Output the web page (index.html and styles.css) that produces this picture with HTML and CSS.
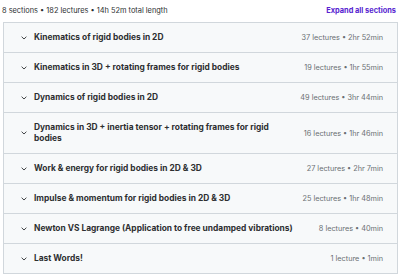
FILE: index.html
```html
<!DOCTYPE html>
<html>
<head>
<meta charset="utf-8">
<link rel="stylesheet" href="styles.css">
</head>
<body>
<div class="page">
  <div class="summary">
    <span class="stats">8 sections • 182 lectures • 14h 52m total length</span>
    <span class="expand">Expand all sections</span>
  </div>
  <div class="panel">
    <div class="row"><svg class="chev" viewBox="0 0 6 4"><path d="M0.6 0.7 L3 3 L5.4 0.7"/></svg><span class="title">Kinematics of rigid bodies in 2D</span><span class="meta">37 lectures • 2hr 52min</span></div>
    <div class="row"><svg class="chev" viewBox="0 0 6 4"><path d="M0.6 0.7 L3 3 L5.4 0.7"/></svg><span class="title">Kinematics in 3D + rotating frames for rigid bodies</span><span class="meta">19 lectures • 1hr 55min</span></div>
    <div class="row"><svg class="chev" viewBox="0 0 6 4"><path d="M0.6 0.7 L3 3 L5.4 0.7"/></svg><span class="title">Dynamics of rigid bodies in 2D</span><span class="meta">49 lectures • 3hr 44min</span></div>
    <div class="row tall"><svg class="chev" viewBox="0 0 6 4"><path d="M0.6 0.7 L3 3 L5.4 0.7"/></svg><span class="title">Dynamics in 3D + inertia tensor + rotating frames for rigid bodies</span><span class="meta">16 lectures • 1hr 46min</span></div>
    <div class="row"><svg class="chev" viewBox="0 0 6 4"><path d="M0.6 0.7 L3 3 L5.4 0.7"/></svg><span class="title">Work &amp; energy for rigid bodies in 2D &amp; 3D</span><span class="meta">27 lectures • 2hr 7min</span></div>
    <div class="row"><svg class="chev" viewBox="0 0 6 4"><path d="M0.6 0.7 L3 3 L5.4 0.7"/></svg><span class="title">Impulse &amp; momentum for rigid bodies in 2D &amp; 3D</span><span class="meta">25 lectures • 1hr 48min</span></div>
    <div class="row"><svg class="chev" viewBox="0 0 6 4"><path d="M0.6 0.7 L3 3 L5.4 0.7"/></svg><span class="title">Newton VS Lagrange (Application to free undamped vibrations)</span><span class="meta">8 lectures • 40min</span></div>
    <div class="row"><svg class="chev" viewBox="0 0 6 4"><path d="M0.6 0.7 L3 3 L5.4 0.7"/></svg><span class="title">Last Words!</span><span class="meta">1 lecture • 1min</span></div>
  </div>
</div>
</body>
</html>
```
FILE: styles.css
```css
* { box-sizing: border-box; }
html, body { margin: 0; padding: 0; background: #fff; }
body { font-family: Inter, "Noto Sans", sans-serif; color: #2d2f31; }
.page { width: 400px; padding: 0 2px 0 2px; }
.summary {
  height: 22px;
  display: flex;
  align-items: center;
  justify-content: space-between;
  padding: 0 2px 1px 0;
}
.stats { font-size: 7.4px; color: #2d2f31; }
.expand { font-size: 7.4px; font-weight: 700; color: #5624d0; }
.panel {
  margin-left: 1px;
  border: 1px solid #d1d7dc;
  border-bottom: none;
}
.row {
  display: flex;
  align-items: center;
  height: 30px;
  background: #f7f9fa;
  border-bottom: 1px solid #d1d7dc;
  padding: 0 14px 0 17px;
}
.row.tall { height: 41px; }
.chev {
  width: 6px;
  height: 4px;
  flex: none;
  fill: none;
  stroke: #2d2f31;
  stroke-width: 0.9;
  margin-right: 7px;
}
.title {
  flex: 1;
  min-width: 0;
  font-size: 8.4px;
  font-weight: 700;
  line-height: 10.6px;
  color: #2d2f31;
}
.meta {
  flex: none;
  margin-left: 6px;
  font-size: 7.3px;
  color: #6a6f73;
}
```
